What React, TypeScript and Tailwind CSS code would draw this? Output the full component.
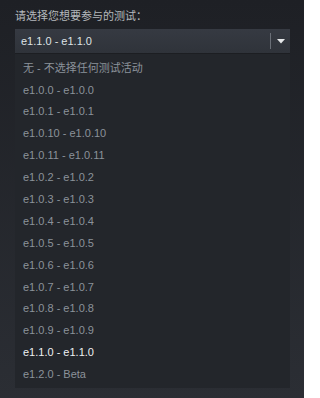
const options = [
  '无 - 不选择任何测试活动',
  'e1.0.0 - e1.0.0',
  'e1.0.1 - e1.0.1',
  'e1.0.10 - e1.0.10',
  'e1.0.11 - e1.0.11',
  'e1.0.2 - e1.0.2',
  'e1.0.3 - e1.0.3',
  'e1.0.4 - e1.0.4',
  'e1.0.5 - e1.0.5',
  'e1.0.6 - e1.0.6',
  'e1.0.7 - e1.0.7',
  'e1.0.8 - e1.0.8',
  'e1.0.9 - e1.0.9',
  'e1.1.0 - e1.1.0',
  'e1.2.0 - Beta',
];

const selected = 'e1.1.0 - e1.1.0';

export default function App() {
  return (
    <div
      className="w-[304px] h-[398px] overflow-hidden bg-gradient-to-b from-[#1e2025] to-[#2b2e34] px-[15px] pt-[9px] text-[11px]"
      style={{ fontFamily: '"Liberation Sans", Arial, "Noto Sans CJK SC", sans-serif' }}
    >
      <div className="h-[14px] leading-[14px] text-[#b4b8bc]">请选择您想要参与的测试：</div>

      {/* Select box */}
      <div className="mt-[6px] w-[275px] h-[24px] flex items-center bg-gradient-to-b from-[#363a42] to-[#2f333a] pl-[6px]">
        <span className="flex-1 text-[#dfe3e6] leading-none">{selected}</span>
        <div className="w-px h-[16px] bg-[#6a6f77]" />
        <div className="w-[19px] flex justify-center">
          <svg width="8" height="5" viewBox="0 0 8 5">
            <path d="M0 0 H8 L4 4.5 Z" fill="#e6e8ea" />
          </svg>
        </div>
      </div>

      {/* Dropdown list */}
      <div className="w-[275px] bg-[#23262b] border-t border-[#1c1e22] pt-[3px] pb-[3px]">
        {options.map((opt) => (
          <div
            key={opt}
            className={`h-[21.9px] flex items-center pl-[8px] ${
              opt === selected ? 'text-[#eef0f2]' : 'text-[#8b929a]'
            }`}
          >
            {opt}
          </div>
        ))}
      </div>
    </div>
  );
}
